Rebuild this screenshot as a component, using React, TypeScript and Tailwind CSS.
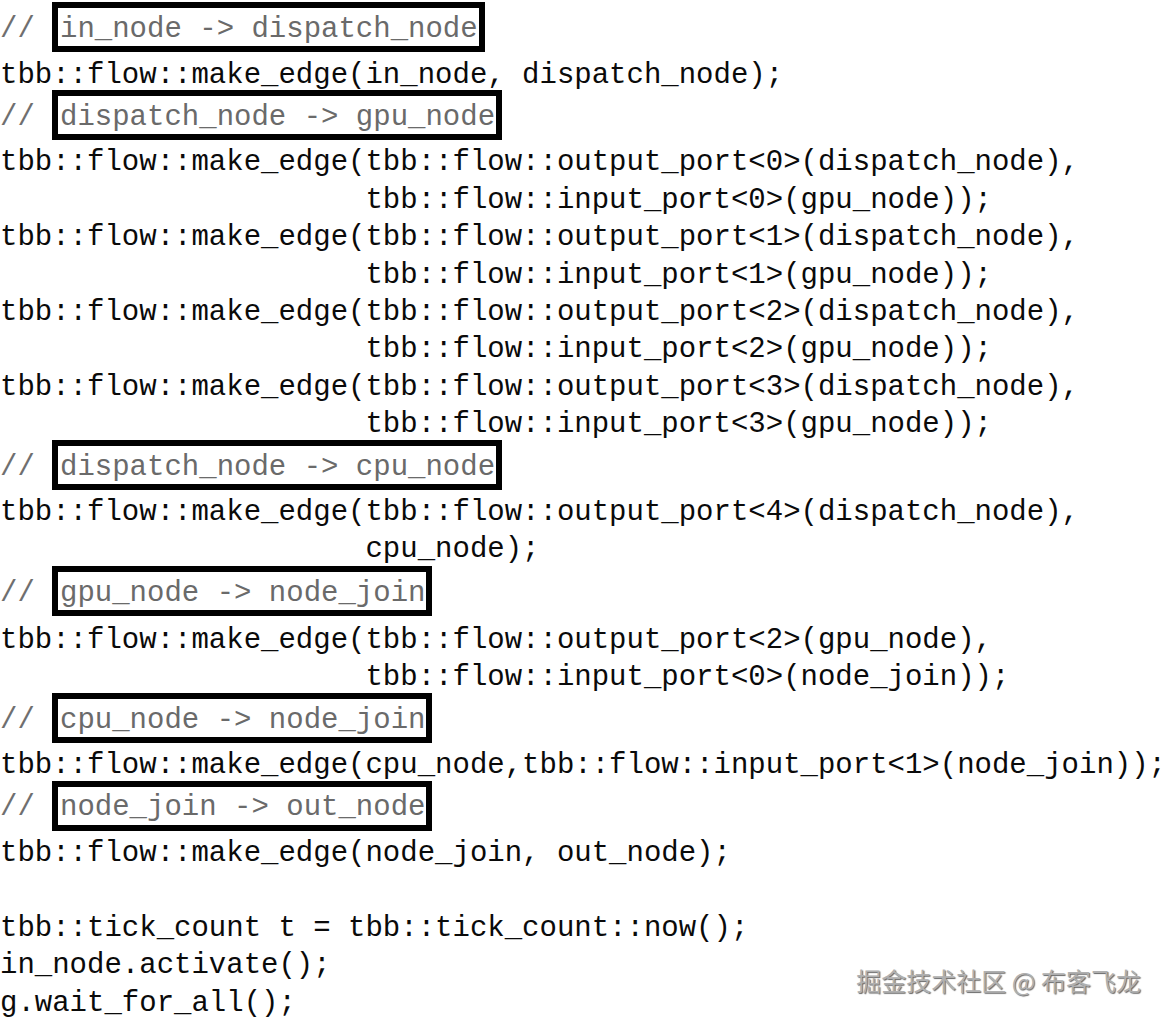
import React from "react";

type Line = { kind: "c"; text: string; tall?: boolean } | { kind: "l"; text: string };

const lines: Line[] = [
  { kind: "c", text: "in_node -> dispatch_node" },
  { kind: "l", text: "tbb::flow::make_edge(in_node, dispatch_node);" },
  { kind: "c", text: "dispatch_node -> gpu_node" },
  { kind: "l", text: "tbb::flow::make_edge(tbb::flow::output_port<0>(dispatch_node)," },
  { kind: "l", text: "                     tbb::flow::input_port<0>(gpu_node));" },
  { kind: "l", text: "tbb::flow::make_edge(tbb::flow::output_port<1>(dispatch_node)," },
  { kind: "l", text: "                     tbb::flow::input_port<1>(gpu_node));" },
  { kind: "l", text: "tbb::flow::make_edge(tbb::flow::output_port<2>(dispatch_node)," },
  { kind: "l", text: "                     tbb::flow::input_port<2>(gpu_node));" },
  { kind: "l", text: "tbb::flow::make_edge(tbb::flow::output_port<3>(dispatch_node)," },
  { kind: "l", text: "                     tbb::flow::input_port<3>(gpu_node));" },
  { kind: "c", text: "dispatch_node -> cpu_node" },
  { kind: "l", text: "tbb::flow::make_edge(tbb::flow::output_port<4>(dispatch_node)," },
  { kind: "l", text: "                     cpu_node);" },
  { kind: "c", text: "gpu_node -> node_join", tall: true },
  { kind: "l", text: "tbb::flow::make_edge(tbb::flow::output_port<2>(gpu_node)," },
  { kind: "l", text: "                     tbb::flow::input_port<0>(node_join));" },
  { kind: "c", text: "cpu_node -> node_join" },
  { kind: "l", text: "tbb::flow::make_edge(cpu_node,tbb::flow::input_port<1>(node_join));" },
  { kind: "c", text: "node_join -> out_node" },
  { kind: "l", text: "tbb::flow::make_edge(node_join, out_node);" },
  { kind: "l", text: " " },
  { kind: "l", text: "tbb::tick_count t = tbb::tick_count::now();" },
  { kind: "l", text: "in_node.activate();" },
  { kind: "l", text: "g.wait_for_all();" },
];

function CommentRow({ text, tall }: { text: string; tall?: boolean }) {
  return (
    <div className={tall ? "flex h-[53px] items-center" : "flex h-[50.5px] items-center"}>
      <span className="w-[52px] shrink-0 whitespace-pre pt-[5px] text-[#6f6f6f]">//</span>
      <span className="flex h-[50px] items-center whitespace-pre border-[6px] border-black bg-white pl-[2px] pr-[1px] pt-[5px] text-[#6a6a6a]">
        {text}
      </span>
    </div>
  );
}

function CodeRow({ text }: { text: string }) {
  return <div className="h-[37.4px] whitespace-pre pt-[6px] leading-[34.4px] text-[#0a0a0a]">{text}</div>;
}

export default function App() {
  return (
    <div className="relative h-[1021px] w-[1167px] overflow-hidden bg-white">
      <div className="flex flex-col pt-[2px] font-['Liberation_Mono',monospace] text-[29px]">
        {lines.map((l, i) =>
          l.kind === "c" ? (
            <CommentRow key={i} text={l.text} tall={l.tall} />
          ) : (
            <CodeRow key={i} text={l.text} />
          )
        )}
      </div>
      <div className="absolute bottom-[26px] right-[26px] whitespace-pre font-['Noto_Sans_CJK_SC',sans-serif] text-[25px] leading-[30px] text-[#b0b0b0] [text-shadow:1px_1px_1px_rgba(0,0,0,0.6)]">
        掘金技术社区 @ 布客飞龙
      </div>
    </div>
  );
}
